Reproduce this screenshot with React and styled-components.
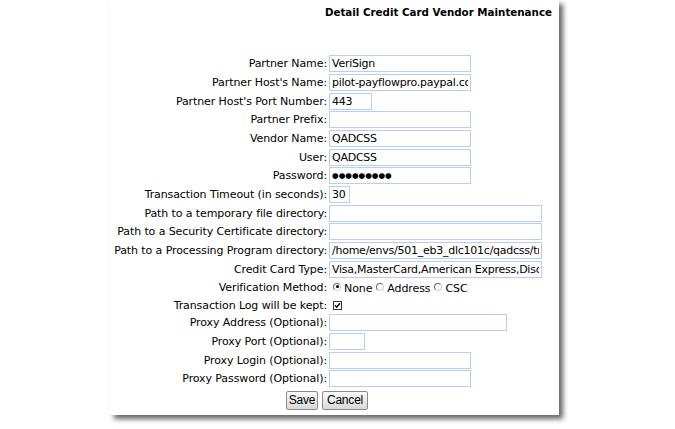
import React from "react";
import styled, { createGlobalStyle } from "styled-components";

const GlobalStyle = createGlobalStyle`
  html, body {
    margin: 0;
    padding: 0;
    background: #ffffff;
  }
  body {
    font-family: "DejaVu Sans", Verdana, sans-serif;
    font-size: 11px;
    letter-spacing: -0.1px;
    color: #000;
  }
`;

const Page = styled.div`
  width: 675px;
  height: 429px;
  background: #fff;
`;

const Panel = styled.div`
  margin-left: 110px;
  width: 449px;
  height: 415px;
  padding-top: 5px;
  box-sizing: border-box;
  background: #fff;
  box-shadow: 4px 4px 5px rgba(0, 0, 0, 0.6);
  display: flex;
  flex-direction: column;
`;

const Title = styled.h2`
  margin: 0;
  padding-right: 7px;
  text-align: right;
  font-size: 10.3px;
  letter-spacing: 0;
  line-height: 14px;
  font-weight: bold;
`;

const Form = styled.div`
  margin-top: 36.3px;
  display: grid;
  grid-template-columns: 217px 1fr;
  column-gap: 2px;
  row-gap: 1.67px;
  align-items: center;
`;

const Label = styled.div`
  text-align: right;
  white-space: nowrap;
  line-height: ${({ h }) => h || 17}px;
`;

const Field = styled.div`
  display: flex;
  align-items: center;
  height: ${({ h }) => h || 17}px;
`;

const Input = styled.input`
  box-sizing: border-box;
  width: ${({ w }) => w}px;
  height: 17px;
  margin: 0;
  padding: 0 2px;
  border: 1px solid #bccdf2;
  background: #fff;
  font-family: "DejaVu Sans", Verdana, sans-serif;
  font-size: ${({ fs }) => fs || 11}px;
  letter-spacing: ${({ ls }) => (ls == null ? -0.25 : ls)}px;
  line-height: 15px;
  color: #000;
  outline: none;
`;

const Radios = styled.div`
  display: flex;
  align-items: center;
  padding-left: 4px;
  padding-top: 1px;
`;

const RadioOpt = styled.span`
  display: inline-flex;
  align-items: center;
  margin-right: 4px;
`;

const RadioDot = styled.span`
  width: 8px;
  height: 8px;
  box-sizing: border-box;
  border-radius: 50%;
  border: 1px solid #6a6a6a;
  border-right-color: #d0d0d0;
  border-bottom-color: #d0d0d0;
  background: #fff;
  margin-right: 3px;
  margin-top: -3px;
  position: relative;
  &::after {
    content: "";
    display: ${({ checked }) => (checked ? "block" : "none")};
    position: absolute;
    left: 1.5px;
    top: 1.5px;
    width: 3px;
    height: 3px;
    border-radius: 50%;
    background: #000;
  }
`;

const Check = styled.span`
  margin-left: 4px;
  width: 9px;
  height: 9px;
  display: inline-flex;
`;

const Buttons = styled.div`
  margin-top: 3.7px;
  display: flex;
  justify-content: center;
  gap: 4px;
  padding-right: 15px;
`;

const Button = styled.button`
  box-sizing: border-box;
  width: ${({ w }) => w}px;
  height: 19px;
  margin: 0;
  padding: 0;
  border: 1px solid #8a8a8a;
  border-radius: 2px;
  background: linear-gradient(#fbfbfb, #d9d9d9);
  font-family: "Liberation Sans", Arial, sans-serif;
  font-size: 12px;
  letter-spacing: -0.2px;
  color: #000;
  line-height: 17px;
`;

const rows = [
  { label: "Partner Name:", value: "VeriSign", w: 142 },
  { label: "Partner Host's Name:", value: "pilot-payflowpro.paypal.com", w: 142 },
  { label: "Partner Host's Port Number:", value: "443", w: 43 },
  { label: "Partner Prefix:", value: "", w: 142 },
  { label: "Vendor Name:", value: "QADCSS", w: 142 },
  { label: "User:", value: "QADCSS", w: 142 },
  { label: "Password:", value: "●●●●●●●●●", w: 142, fs: 7.6, ls: 0 },
  { label: "Transaction Timeout (in seconds):", value: "30", w: 21 },
  { label: "Path to a temporary file directory:", value: "", w: 213 },
  { label: "Path to a Security Certificate directory:", value: "", w: 213 },
  { label: "Path to a Processing Program directory:", value: "/home/envs/501_eb3_dlc101c/qadcss/tmp", w: 213 },
  { label: "Credit Card Type:", value: "Visa,MasterCard,American Express,Discover", w: 213 },
];

const proxyRows = [
  { label: "Proxy Address (Optional):", w: 178 },
  { label: "Proxy Port (Optional):", w: 36 },
  { label: "Proxy Login (Optional):", w: 142 },
  { label: "Proxy Password (Optional):", w: 142 },
];

const App = () => (
  <Page>
    <GlobalStyle />
    <Panel>
      <Title>Detail Credit Card Vendor Maintenance</Title>
      <Form>
        {rows.map((r) => (
          <React.Fragment key={r.label}>
            <Label>{r.label}</Label>
            <Field>
              <Input w={r.w} fs={r.fs} ls={r.ls} defaultValue={r.value} readOnly />
            </Field>
          </React.Fragment>
        ))}

        <Label>Verification Method:</Label>
        <Field>
          <Radios>
            <RadioOpt><RadioDot checked />None</RadioOpt>
            <RadioOpt><RadioDot />Address</RadioOpt>
            <RadioOpt><RadioDot />CSC</RadioOpt>
          </Radios>
        </Field>

        <Label h={15}>Transaction Log will be kept:</Label>
        <Field h={15}>
          <Check>
            <svg width="9" height="9" viewBox="0 0 9 9">
              <rect x="0.5" y="0.5" width="8" height="8" fill="#fff" stroke="#333" />
              <path d="M2 4.3 L3.7 6.2 L7 2.3" fill="none" stroke="#000" strokeWidth="1.4" />
            </svg>
          </Check>
        </Field>

        {proxyRows.map((r) => (
          <React.Fragment key={r.label}>
            <Label>{r.label}</Label>
            <Field>
              <Input w={r.w} defaultValue="" readOnly />
            </Field>
          </React.Fragment>
        ))}
      </Form>
      <Buttons>
        <Button w={32}>Save</Button>
        <Button w={46}>Cancel</Button>
      </Buttons>
    </Panel>
  </Page>
);

export default App;
